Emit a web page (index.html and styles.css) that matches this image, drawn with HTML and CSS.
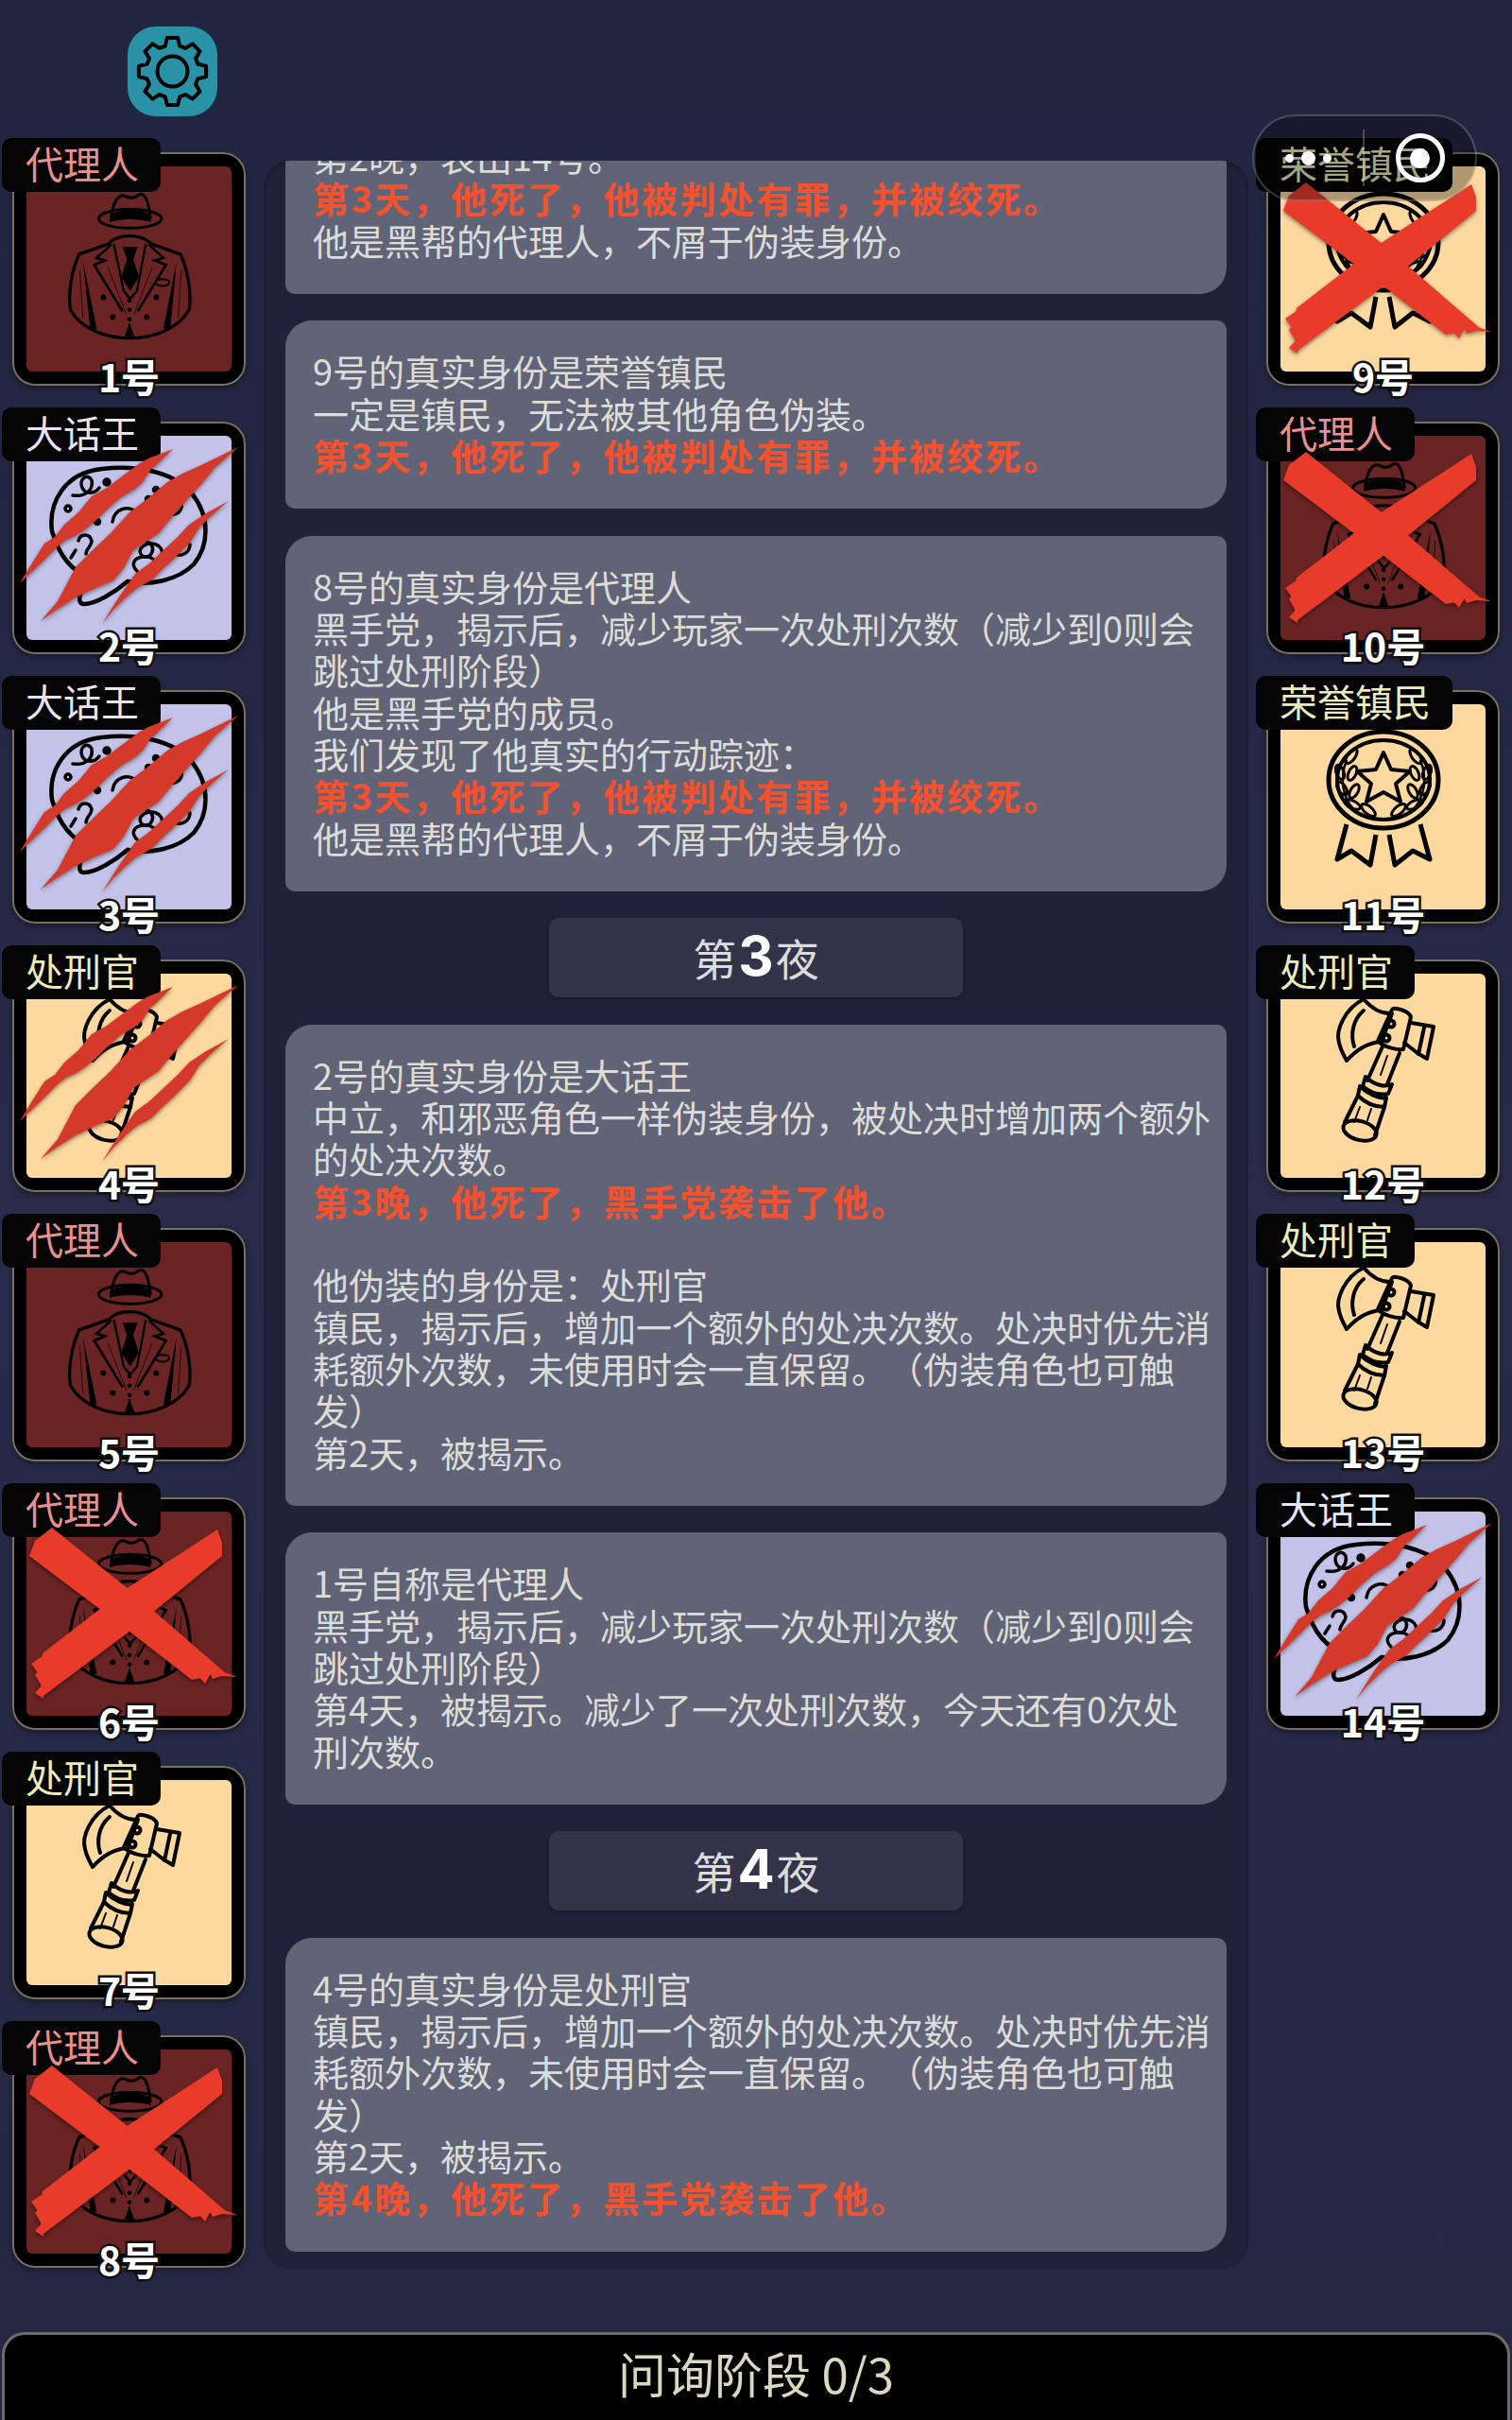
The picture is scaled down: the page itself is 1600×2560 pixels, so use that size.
FILE: index.html
```html
<!DOCTYPE html>
<html lang="zh-CN">

<head>
    <meta charset="UTF-8">
    <meta name="viewport" content="width=device-width, initial-scale=1.0">
    <title>问询阶段</title>
    <link rel="stylesheet" href="styles.css">
</head>

<body>
    <svg class="defs" width="0" height="0">
        <defs>
            <g id="suit">
                <ellipse cx="412" cy="695" rx="100" ry="30" fill="none" stroke="#000" stroke-width="9" />
                <path d="M352 690C358 640 378 612 398 624C412 632 428 630 442 618C462 612 472 650 476 690C440 670 385 670 352 690Z" fill="none" stroke="#000" stroke-width="9" />
                <path d="M350 680C390 664 440 664 474 680L478 706C440 694 385 694 346 706Z" fill="#000" />
                <path d="M250 808L345 775C370 742 450 742 478 775L572 808C596 860 608 930 600 985C530 1105 290 1105 222 985C214 930 226 860 250 808Z" fill="none" stroke="#000" stroke-width="10" />
                <path d="M352 778L305 820L332 828L298 842L388 990M472 778L518 820L490 828L526 842L436 990" fill="none" stroke="#000" stroke-width="8" />
                <path d="M360 775L392 925L412 950L434 925L462 775" fill="none" stroke="#000" stroke-width="7" />
                <path d="M388 785H436L422 825L440 880L412 925L384 880L402 825Z" fill="#000" />
                <path d="M262 830L285 1045H306ZM560 830L540 1045H518Z" fill="#000" />
                <path d="M392 1078L410 1025L428 1078Z" fill="#000" />
                <path d="M252 860L262 1010M575 860L565 1010M342 850L400 1000M482 850L424 1000" fill="none" stroke="#000" stroke-width="2" />
                <ellipse cx="515" cy="898" rx="22" ry="11" fill="none" stroke="#000" stroke-width="6" />
                <circle cx="327" cy="945" r="9" />
                <circle cx="495" cy="945" r="9" />
                <circle cx="357" cy="1008" r="9" />
                <circle cx="465" cy="1008" r="9" />
                <circle cx="410" cy="955" r="7" />
                <circle cx="410" cy="985" r="7" />
                <circle cx="410" cy="1015" r="7" />
            </g>
            <g id="bubble" fill="none" stroke="#000" stroke-width="3.5" stroke-linecap="round">
                <path d="M55 4C90 0 130 6 150 30C170 55 168 85 152 105C135 122 105 128 82 123C68 135 48 147 36 147C28 147 30 135 42 118C20 112 8 90 2 70C-2 40 15 8 55 4Z" stroke-width="4.5" />
                <path d="M24 32C38 34 46 26 44 16C40 8 30 14 34 24C38 32 48 30 52 24" />
                <circle cx="19" cy="46" r="3" />
                <path d="M66 60C68 46 82 42 92 50C100 58 92 68 84 64C78 60 82 54 88 56" />
                <path d="M120 32C132 26 146 40 136 50C128 56 120 48 126 42" />
                <path d="M82 88C92 74 112 80 108 92C104 102 92 96 96 88C104 78 122 84 118 96" />
                <path d="M92 112C80 100 100 92 110 100C116 108 106 116 98 112" />
                <path d="M30 80C32 72 42 72 44 80C44 86 38 88 38 94" />
                <path d="M22 98L27 90M130 94C140 98 148 92 148 84" />
                <circle cx="60" cy="18" r="3" fill="#000" />
                <circle cx="112" cy="26" r="2.5" fill="#000" />
                <circle cx="50" cy="60" r="2.5" fill="#000" />
                <circle cx="104" cy="36" r="2.5" fill="#000" />
                <circle cx="70" cy="108" r="2.5" fill="#000" />
                <circle cx="18" cy="72" r="2.5" fill="#000" />
            </g>
            <g id="medal" fill="none" stroke="#000">
                <ellipse cx="61" cy="53" rx="58" ry="51" stroke-width="5" />
                <ellipse cx="61" cy="53" rx="49" ry="42" stroke-width="4" />
                <path d="M61 24L69 42L89 44L74 57L79 76L61 66L43 76L48 57L33 44L53 42Z" stroke-width="4" stroke-linejoin="round" />
                <path d="M30 85C18 72 14 52 22 32M92 85C104 72 108 52 100 32" stroke-width="2.5" />
                <g stroke-width="3">
                    <ellipse cx="27" cy="28" rx="4" ry="9" transform="rotate(35 27 28)" />
                    <ellipse cx="15" cy="45" rx="4" ry="8" transform="rotate(-20 15 45)" />
                    <ellipse cx="28" cy="46" rx="4" ry="8" transform="rotate(25 28 46)" />
                    <ellipse cx="17" cy="62" rx="4" ry="8" transform="rotate(-35 17 62)" />
                    <ellipse cx="30" cy="65" rx="4" ry="8" transform="rotate(30 30 65)" />
                    <ellipse cx="28" cy="79" rx="4" ry="9" transform="rotate(-65 28 79)" />
                    <ellipse cx="45" cy="85" rx="4" ry="9" transform="rotate(-50 45 85)" />
                    <ellipse cx="95" cy="28" rx="4" ry="9" transform="rotate(-35 95 28)" />
                    <ellipse cx="107" cy="45" rx="4" ry="8" transform="rotate(20 107 45)" />
                    <ellipse cx="94" cy="46" rx="4" ry="8" transform="rotate(-25 94 46)" />
                    <ellipse cx="105" cy="62" rx="4" ry="8" transform="rotate(35 105 62)" />
                    <ellipse cx="92" cy="65" rx="4" ry="8" transform="rotate(-30 92 65)" />
                    <ellipse cx="94" cy="79" rx="4" ry="9" transform="rotate(65 94 79)" />
                    <ellipse cx="77" cy="85" rx="4" ry="9" transform="rotate(50 77 85)" />
                </g>
                <path d="M22 100L12 137L27 128L47 143L53 111M100 100L110 137L92 128L73 143L67 111" stroke-width="5" stroke-linejoin="round" />
            </g>
            <g id="axe" fill="none" stroke="#000" stroke-width="4" stroke-linejoin="round" stroke-linecap="round">
                <path d="M28 2C8 12-2 35 2 48C4 57 8 63 10 67C18 58 30 48 47 47L58 17C45 18 35 10 28 2Z" />
                <path d="M28 14C16 24 14 40 18 52" />
                <path d="M58 13C60 10 76 14 78 21L70 55C62 56 48 52 43 46Z" />
                <path d="M78 27L102 31L95 65L85 59L71 48" />
                <path d="M92 32L86 60" />
                <circle cx="57" cy="28" r="3.5" />
                <circle cx="52" cy="43" r="3.5" />
                <path d="M48 52L32 88M66 59L53 92" />
                <path d="M53 62L46 82M62 70L56 84" stroke-width="2" />
                <path d="M30 84C38 92 50 96 58 92L54 102C44 104 34 100 27 94Z" />
                <path d="M24 94C32 102 44 108 52 106L50 116C40 116 30 112 22 104Z" />
                <path d="M22 104L8 132M50 116L40 146" />
                <ellipse cx="24" cy="141" rx="18" ry="10" transform="rotate(15 24 141)" />
                <path d="M24 116L18 132M36 118L32 130" stroke-width="2" />
            </g>
            <g id="scratch" class="scratch-shape">
                <polygon points="8,171 22,148 34,129 45,122 55,109 70,96 84,79 100,70 120,55 135,44 144,39 170,29 150,48 147,50 138,64 130,71 115,80 100,93 88,105 77,114 68,120 57,125 48,132 30,150" />
                <polygon points="30,211 48,190 67,154 85,136 104,118 124,96 145,80 164,64 180,55 200,46 239,27 215,48 200,66 184,84 168,102 155,118 140,128 128,136 118,155 107,168 88,176 67,186 48,198" />
                <polygon points="95,214 105,198 114,184 130,161 145,150 160,136 175,122 187,109 205,97 229,84 210,100 198,112 188,128 170,146 160,155 147,168 132,176 120,186 108,198" />
            </g>
            <g id="cross" class="cross-shape">
                <polygon points="18,62 24,46 42,32 123,97 226,186 214,184 206,190 190,193 123,141" />
                <polygon points="217,34 222,48 222,62 125,141 33,210 30,198 24,188 30,180 32,165 120,97" />
                <polygon points="20,176 32,168 30,190" />
                <polygon points="24,207 34,196 33,213" />
                <polygon points="205,178 238,190 222,189 212,192" />
                <polygon points="196,188 210,186 204,197" />
            </g>
        </defs>
    </svg>

    <div class="header">
        <button class="settings-btn" title="设置">
            <svg width="95" height="95" viewBox="-47.5 -47.5 95 95" fill="none" stroke="#000" stroke-width="4" stroke-linejoin="round">
                <polygon points="-7.7,-26.9 -5.6,-35.6 5.6,-35.6 7.7,-26.9 13.6,-24.5 21.2,-29.1 29.1,-21.2 24.5,-13.6 26.9,-7.7 35.6,-5.6 35.6,5.6 26.9,7.7 24.5,13.6 29.1,21.2 21.2,29.1 13.6,24.5 7.7,26.9 5.6,35.6 -5.6,35.6 -7.7,26.9 -13.6,24.5 -21.2,29.1 -29.1,21.2 -24.5,13.6 -26.9,7.7 -35.6,5.6 -35.6,-5.6 -26.9,-7.7 -24.5,-13.6 -29.1,-21.2 -21.2,-29.1 -13.6,-24.5" />
                <circle r="16" />
            </svg>
        </button>
    </div>

    <div class="capsule">
        <div class="capsule-dots">
            <span class="dot"></span>
            <span class="dot dot-big"></span>
            <span class="dot"></span>
        </div>
        <span class="capsule-line"></span>
        <div class="capsule-close">
            <span class="close-ring"><span class="close-dot"></span></span>
        </div>
    </div>

    <div class="main">
        <div class="players">
            <div class="card bg-agent">
                <span class="role role-agent">代理人</span>
                <svg class="icon icon-suit" viewBox="215 610 390 475"><use href="#suit" /></svg>
                <span class="num">1号</span>
            </div>
            <div class="card bg-liar">
                <span class="role role-liar">大话王</span>
                <svg class="icon icon-bubble" viewBox="0 0 166 148"><use href="#bubble" /></svg>
                <svg class="mark" viewBox="0 0 247 247"><use href="#scratch" /></svg>
                <span class="num">2号</span>
            </div>
            <div class="card bg-liar">
                <span class="role role-liar">大话王</span>
                <svg class="icon icon-bubble" viewBox="0 0 166 148"><use href="#bubble" /></svg>
                <svg class="mark" viewBox="0 0 247 247"><use href="#scratch" /></svg>
                <span class="num">3号</span>
            </div>
            <div class="card bg-town">
                <span class="role role-town">处刑官</span>
                <svg class="icon icon-axe" viewBox="-1 0 105 153"><use href="#axe" /></svg>
                <svg class="mark" viewBox="0 0 247 247"><use href="#scratch" /></svg>
                <span class="num">4号</span>
            </div>
            <div class="card bg-agent">
                <span class="role role-agent">代理人</span>
                <svg class="icon icon-suit" viewBox="215 610 390 475"><use href="#suit" /></svg>
                <span class="num">5号</span>
            </div>
            <div class="card bg-agent">
                <span class="role role-agent">代理人</span>
                <svg class="icon icon-suit" viewBox="215 610 390 475"><use href="#suit" /></svg>
                <svg class="mark" viewBox="0 0 247 247"><use href="#cross" /></svg>
                <span class="num">6号</span>
            </div>
            <div class="card bg-town">
                <span class="role role-town">处刑官</span>
                <svg class="icon icon-axe" viewBox="-1 0 105 153"><use href="#axe" /></svg>
                <span class="num">7号</span>
            </div>
            <div class="card bg-agent">
                <span class="role role-agent">代理人</span>
                <svg class="icon icon-suit" viewBox="215 610 390 475"><use href="#suit" /></svg>
                <svg class="mark" viewBox="0 0 247 247"><use href="#cross" /></svg>
                <span class="num">8号</span>
            </div>
        </div>

        <div class="log-panel">
            <div class="log-list">
                <div class="msg">
                    <p>第2晚，表出14号。</p>
                    <p class="red">第3天，他死了，他被判处有罪，并被绞死。</p>
                    <p>他是黑帮的代理人，不屑于伪装身份。</p>
                </div>
                <div class="msg">
                    <p>9号的真实身份是荣誉镇民</p>
                    <p>一定是镇民，无法被其他角色伪装。</p>
                    <p class="red">第3天，他死了，他被判处有罪，并被绞死。</p>
                </div>
                <div class="msg">
                    <p>8号的真实身份是代理人</p>
                    <p>黑手党，揭示后，减少玩家一次处刑次数（减少到0则会跳过处刑阶段）</p>
                    <p>他是黑手党的成员。</p>
                    <p>我们发现了他真实的行动踪迹：</p>
                    <p class="red">第3天，他死了，他被判处有罪，并被绞死。</p>
                    <p>他是黑帮的代理人，不屑于伪装身份。</p>
                </div>
                <div class="night">第<b>3</b>夜</div>
                <div class="msg">
                    <p>2号的真实身份是大话王</p>
                    <p>中立，和邪恶角色一样伪装身份，被处决时增加两个额外的处决次数。</p>
                    <p class="red">第3晚，他死了，黑手党袭击了他。</p>
                    <p>&nbsp;</p>
                    <p>他伪装的身份是：处刑官</p>
                    <p>镇民，揭示后，增加一个额外的处决次数。处决时优先消耗额外次数，未使用时会一直保留。（伪装角色也可触发）</p>
                    <p>第2天，被揭示。</p>
                </div>
                <div class="msg">
                    <p>1号自称是代理人</p>
                    <p>黑手党，揭示后，减少玩家一次处刑次数（减少到0则会跳过处刑阶段）</p>
                    <p>第4天，被揭示。减少了一次处刑次数，今天还有0次处刑次数。</p>
                </div>
                <div class="night">第<b>4</b>夜</div>
                <div class="msg">
                    <p>4号的真实身份是处刑官</p>
                    <p>镇民，揭示后，增加一个额外的处决次数。处决时优先消耗额外次数，未使用时会一直保留。（伪装角色也可触发）</p>
                    <p>第2天，被揭示。</p>
                    <p class="red">第4晚，他死了，黑手党袭击了他。</p>
                </div>
            </div>
        </div>

        <div class="players">
            <div class="card bg-town">
                <span class="role role-town">荣誉镇民</span>
                <svg class="icon icon-medal" viewBox="0 0 122 145"><use href="#medal" /></svg>
                <svg class="mark" viewBox="0 0 247 247"><use href="#cross" /></svg>
                <span class="num">9号</span>
            </div>
            <div class="card bg-agent">
                <span class="role role-agent">代理人</span>
                <svg class="icon icon-suit" viewBox="215 610 390 475"><use href="#suit" /></svg>
                <svg class="mark" viewBox="0 0 247 247"><use href="#cross" /></svg>
                <span class="num">10号</span>
            </div>
            <div class="card bg-town">
                <span class="role role-town">荣誉镇民</span>
                <svg class="icon icon-medal" viewBox="0 0 122 145"><use href="#medal" /></svg>
                <span class="num">11号</span>
            </div>
            <div class="card bg-town">
                <span class="role role-town">处刑官</span>
                <svg class="icon icon-axe" viewBox="-1 0 105 153"><use href="#axe" /></svg>
                <span class="num">12号</span>
            </div>
            <div class="card bg-town">
                <span class="role role-town">处刑官</span>
                <svg class="icon icon-axe" viewBox="-1 0 105 153"><use href="#axe" /></svg>
                <span class="num">13号</span>
            </div>
            <div class="card bg-liar">
                <span class="role role-liar">大话王</span>
                <svg class="icon icon-bubble" viewBox="0 0 166 148"><use href="#bubble" /></svg>
                <svg class="mark" viewBox="0 0 247 247"><use href="#scratch" /></svg>
                <span class="num">14号</span>
            </div>
        </div>
    </div>

    <div class="phase-bar">问询阶段 0/3</div>
</body>

</html>
```

FILE: styles.css
```css
* {
    margin: 0;
    padding: 0;
    box-sizing: border-box;
}

body {
    position: relative;
    display: flex;
    flex-direction: column;
    height: 2560px;
    overflow: hidden;
    font-family: "Noto Sans CJK SC", "Noto Sans", sans-serif;
    text-spacing-trim: space-all;
    background: linear-gradient(#222540, #282b49 50%, #252843);
    color: #dcdcd8;
}

.defs {
    position: absolute;
}

/* top */
.header {
    height: 146px;
    padding: 28px 0 0 135px;
}

.settings-btn {
    display: block;
    width: 95px;
    height: 95px;
    background: #2a92a6;
    border: none;
    border-radius: 30px;
}

.settings-btn svg {
    display: block;
}

.capsule {
    position: absolute;
    z-index: 5;
    top: 121px;
    left: 1325px;
    display: flex;
    align-items: center;
    width: 238px;
    height: 92px;
    background: rgba(0, 0, 0, 0.3);
    border: 2px solid rgba(255, 255, 255, 0.22);
    border-radius: 46px;
}

.capsule-dots {
    display: flex;
    align-items: center;
    justify-content: center;
    gap: 8px;
    width: 115px;
}

.dot {
    width: 9px;
    height: 9px;
    background: #fff;
    border-radius: 50%;
}

.dot-big {
    width: 15px;
    height: 15px;
}

.capsule-line {
    width: 2px;
    height: 60px;
    background: rgba(255, 255, 255, 0.25);
}

.capsule-close {
    display: flex;
    flex: 1;
    align-items: center;
    justify-content: center;
}

.close-ring {
    display: flex;
    align-items: center;
    justify-content: center;
    width: 52px;
    height: 52px;
    border: 5px solid #fff;
    border-radius: 50%;
}

.close-dot {
    width: 21px;
    height: 21px;
    background: #fff;
    border-radius: 50%;
}

/* columns */
.main {
    display: flex;
    flex: 1;
    min-height: 0;
}

.players {
    display: flex;
    flex-direction: column;
    gap: 38px;
    flex: none;
    width: 279px;
    padding: 15px 0 0 13px;
}

.players:last-child {
    padding-left: 19px;
}

.card {
    position: relative;
    flex: none;
    width: 247px;
    height: 246.5px;
    border: 15px solid #000;
    border-radius: 24px;
    outline: 2px solid #78715f;
    outline-offset: -2px;
    box-shadow: 0 3px 6px rgba(0, 0, 0, 0.35);
}

.card::before {
    content: "";
    position: absolute;
    inset: 0;
    border-radius: 6px;
    background: inherit;
}

.bg-agent {
    background: #6b2424;
}

.bg-liar {
    background: #c3c2e8;
}

.bg-town {
    background: #fdd9a0;
}

.role {
    position: absolute;
    z-index: 2;
    top: -30px;
    left: -26px;
    height: 57px;
    padding: 0 23px 0 25px;
    background: #050505;
    border-radius: 10px;
    font-size: 40px;
    line-height: 53px;
    white-space: nowrap;
}

.role-agent {
    color: #e89090;
}

.role-liar {
    color: #e6e4f6;
}

.role-town {
    color: #ecebbb;
}

.icon {
    position: absolute;
    display: block;
    overflow: visible;
}

.icon-suit {
    top: 27px;
    left: 44px;
    width: 130px;
    height: 158px;
}

.icon-bubble {
    top: 31px;
    left: 25px;
    width: 166px;
    height: 148px;
}

.icon-medal {
    top: 27px;
    left: 48px;
    width: 122px;
    height: 145px;
}

.icon-axe {
    top: 25px;
    left: 59px;
    width: 105px;
    height: 153px;
}

.mark {
    position: absolute;
    z-index: 3;
    top: -15px;
    left: -15px;
    width: 247px;
    height: 247px;
    overflow: visible;
    filter: drop-shadow(0 2px 2px rgba(0, 0, 0, 0.45));
}

.scratch-shape {
    fill: #d5392a;
}

.cross-shape {
    fill: #e83b2a;
}

.num {
    position: absolute;
    z-index: 4;
    top: 199px;
    left: -15px;
    width: 247px;
    color: #fff;
    font-size: 41px;
    font-weight: 700;
    line-height: 44px;
    text-align: center;
    -webkit-text-stroke: 5px #111;
    paint-order: stroke fill;
}

/* log */
.log-panel {
    flex: none;
    width: 1042px;
    height: 2230px;
    margin-top: 24px;
    overflow: hidden;
    background: #20213a;
    border-radius: 28px;
    box-shadow: inset 0 3px 4px rgba(0, 0, 0, 0.25);
}

.log-list {
    display: flex;
    flex-direction: column;
    gap: 28.5px;
    margin-top: -27px;
    padding: 0 23px;
}

.msg {
    padding: 31px 13px 35px 29px;
    background: #616476;
    border-radius: 28px 10px 28px 10px;
    font-size: 38px;
    line-height: 44.3px;
}

.msg:first-child {
    padding-top: 0;
    border-top-left-radius: 0;
    border-top-right-radius: 0;
}

.red {
    color: #f4512e;
    font-weight: 700;
    letter-spacing: 2.4px;
}

.night {
    align-self: center;
    width: 438px;
    height: 84px;
    background: #33334a;
    border-radius: 10px;
    box-shadow: 0 2px 4px rgba(0, 0, 0, 0.25);
    font-size: 46px;
    line-height: 80px;
    text-align: center;
}

.night b {
    margin: 0 2px;
    color: #fff;
    font-family: Inter, "Noto Sans", sans-serif;
    font-size: 58px;
    font-weight: 700;
}

/* bottom */
.phase-bar {
    flex: none;
    height: 93px;
    margin: 0 2px;
    background: #000;
    border: 3px solid #6e6d68;
    border-bottom: none;
    border-radius: 24px 24px 0 0;
    color: #ddd7c0;
    font-size: 51px;
    line-height: 80px;
    text-align: center;
}
```
